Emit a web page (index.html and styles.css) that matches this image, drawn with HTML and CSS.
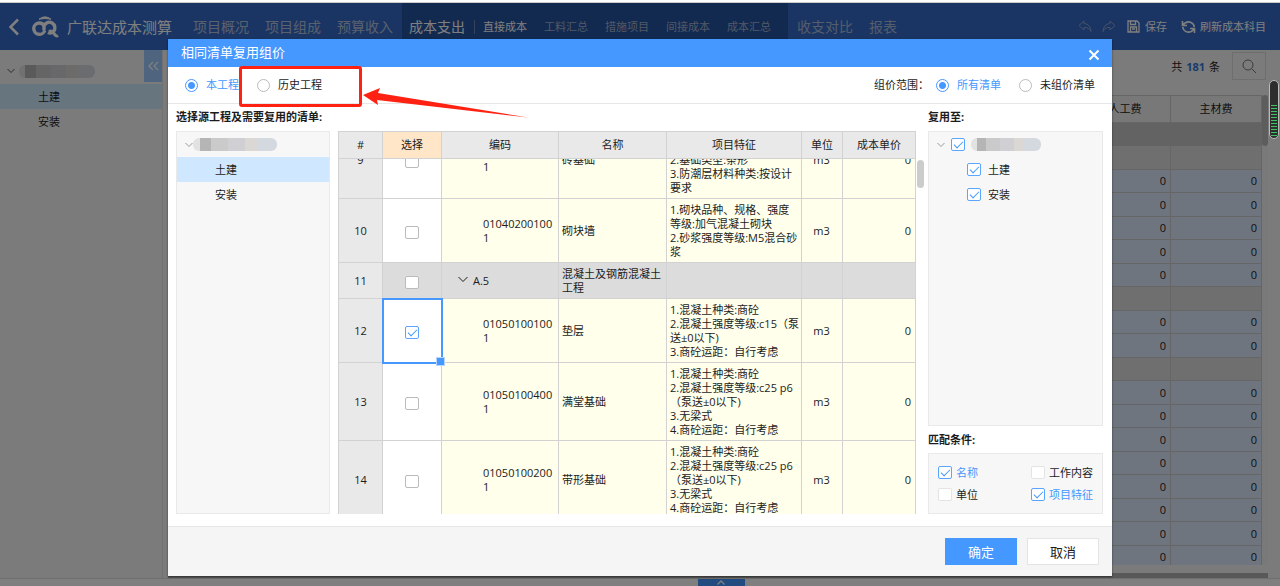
FILE: index.html
```html
<!DOCTYPE html>
<html lang="zh-CN">
<head>
<meta charset="utf-8">
<title>广联达成本测算</title>
<link rel="stylesheet" href="styles.css">
</head>
<body>
<div class="app">
  <header class="topbar">
    <button class="back" aria-label="返回"><svg width="12" height="18" viewBox="0 0 12 18"><path d="M10 1.500 2.500 9l7.500 7.500" fill="none" stroke="currentColor" stroke-width="2.500"/></svg></button>
    <svg class="logo" width="28" height="22" viewBox="0 0 28 22" fill="none" stroke="currentColor">
      <path d="M8 3.200Q14-1.500 20 3.200Q14 1.800 8 3.200Z" fill="currentColor" stroke-width="1"/>
      <path d="M9 18.200A5.600 5.600 0 1 1 13 9.500V14.500" stroke-width="3.400"/>
      <path d="M13 10A5.600 5.600 0 1 1 22.500 15.500Q20 18 17 16.500" stroke-width="3.400"/>
      <path d="M8 18.500Q12 18.500 14 14.500M18 15.500Q21 14 23 17.500T27 19.500" stroke-width="3"/>
    </svg>
    <span class="brand">广联达成本测算</span>
    <nav class="menu">
      <a href="#">项目概况</a><a href="#">项目组成</a><a href="#">预算收入</a>
    </nav>
    <nav class="submenu">
      <a class="main-item" href="#">成本支出</a>
      <a class="on" href="#">直接成本</a><a href="#">工料汇总</a><a href="#">措施项目</a><a href="#">间接成本</a><a href="#">成本汇总</a>
    </nav>
    <nav class="menu after">
      <a href="#">收支对比</a><a href="#">报表</a>
    </nav>
    <div class="tools">
      <button class="dim" aria-label="撤销"><svg width="14" height="13" viewBox="0 0 14 13"><path d="M6 1 1 5.500 6 10V7.500q5-.5 7 4Q12.500 4 6 3.500Z" fill="none" stroke="currentColor"/></svg></button>
      <button class="dim redo" aria-label="重做"><svg width="14" height="13" viewBox="0 0 14 13"><path d="M8 1l5 4.500L8 10V7.500q-5-.5-7 4Q1.500 4 8 3.500Z" fill="none" stroke="currentColor"/></svg></button>
      <button class="save"><svg width="13" height="13" viewBox="0 0 13 13" fill="none" stroke="currentColor" stroke-width="1.300"><path d="M1 1h9l2 2v9H1ZM3.500 1v3.500h5V1M3.500 12V7h6v5M5 9h3"/></svg>保存</button>
      <button class="refresh"><svg width="15" height="14" viewBox="0 0 15 14" fill="none" stroke="currentColor" stroke-width="1.600"><path d="M1.500 1v4.500H6M1.800 5.300Q5 .8 9.500 2.200 12.800 3.500 13.300 7M13.500 13V8.500H9M13.200 8.700Q10 13.200 5.500 11.800 2.200 10.500 1.700 7"/></svg>刷新成本科目</button>
    </div>
  </header>
  <div class="workspace">
    <aside class="side">
      <div class="side-root"><svg width="8" height="6" viewBox="0 0 8 6"><path d="M.5 1 4 4.500 7.500 1" fill="none" stroke="currentColor"/></svg><span class="mask"></span></div>
      <div class="side-item picked">土建</div>
      <div class="side-item">安装</div>
      <button class="fold" aria-label="收起"><svg width="11" height="10" viewBox="0 0 11 10"><path d="M5 1 1 5l4 4M10 1 6 5l4 4" fill="none" stroke="currentColor" stroke-width="1.300"/></svg></button>
    </aside>
    <main class="content">
      <div class="content-bar">
        <span>共 <b>181</b> 条</span>
        <button class="search" aria-label="搜索"><svg width="15" height="15" viewBox="0 0 15 15"><circle cx="6" cy="6" r="5" fill="none" stroke="currentColor"/><path d="m9.500 9.500 4.500 4.500" stroke="currentColor"/></svg></button>
      </div>
      <div class="cost-wrap">
        <table class="cost">
          <colgroup><col><col class="c-num"><col class="c-num"></colgroup>
          <thead><tr><th></th><th>人工费</th><th>主材费</th></tr></thead>
          <tbody>
            <tr class="total"><td></td><td></td><td></td></tr>
            <tr class="group"><td></td><td></td><td></td></tr>
            <tr><td></td><td>0</td><td>0</td></tr>
            <tr><td></td><td>0</td><td>0</td></tr>
            <tr><td></td><td>0</td><td>0</td></tr>
            <tr><td></td><td>0</td><td>0</td></tr>
            <tr><td></td><td>0</td><td>0</td></tr>
            <tr class="group"><td></td><td></td><td></td></tr>
            <tr><td></td><td>0</td><td>0</td></tr>
            <tr><td></td><td>0</td><td>0</td></tr>
            <tr class="group"><td></td><td></td><td></td></tr>
            <tr><td></td><td>0</td><td>0</td></tr>
            <tr><td></td><td>0</td><td>0</td></tr>
            <tr><td></td><td>0</td><td>0</td></tr>
            <tr><td></td><td>0</td><td>0</td></tr>
            <tr><td></td><td>0</td><td>0</td></tr>
            <tr><td></td><td>0</td><td>0</td></tr>
            <tr><td></td><td>0</td><td>0</td></tr>
            <tr><td></td><td>0</td><td>0</td></tr>
          </tbody>
        </table>
        <div class="vtrack"><i></i></div>
      </div>
      <div class="htrack"></div>
    </main>
  </div>
  <footer class="bottom"><button aria-label="展开"><svg width="8" height="5" viewBox="0 0 8 5"><path d="M.5 4.500 4 1l3.500 3.500" fill="none" stroke="currentColor" stroke-width="1.300"/></svg></button></footer>

  <div class="overlay">
    <section class="dialog" role="dialog" aria-labelledby="dlg-title">
      <header class="dlg-head">
        <h1 id="dlg-title">相同清单复用组价</h1>
        <button aria-label="关闭"><svg width="12" height="12" viewBox="0 0 12 12"><path d="m1.500 1.500 9 9m0-9-9 9" stroke="currentColor" stroke-width="2"/></svg></button>
      </header>
      <div class="options">
        <label class="opt"><input type="radio" name="src" checked><span>本工程</span></label>
        <label class="opt"><input type="radio" name="src"><span>历史工程</span></label>
        <span class="range">组价范围：</span>
        <label class="opt"><input type="radio" name="range" checked><span>所有清单</span></label>
        <label class="opt"><input type="radio" name="range"><span>未组价清单</span></label>
      </div>
      <div class="dlg-body">
        <div class="left">
          <h2>选择源工程及需要复用的清单:</h2>
          <div class="pair">
            <div class="panel source">
              <div class="node root"><svg width="8" height="6" viewBox="0 0 8 6"><path d="M.5 1 4 4.500 7.500 1" fill="none" stroke="currentColor"/></svg><span class="mask"></span></div>
              <div class="node leaf picked">土建</div>
              <div class="node leaf">安装</div>
            </div>
            <div class="grid-box">
              <div class="grid-scroll" id="grid">
                <table class="grid">
                  <colgroup><col class="g-no"><col class="g-sel"><col class="g-code"><col class="g-name"><col class="g-feat"><col class="g-unit"><col class="g-price"></colgroup>
                  <thead><tr><th>#</th><th class="sel-head">选择</th><th>编码</th><th>名称</th><th>项目特征</th><th>单位</th><th>成本单价</th></tr></thead>
                  <tbody>
                    <tr class="tall"><th>9</th><td class="sel"><input type="checkbox" aria-label="选择 9"></td><td class="code">010401001001</td><td>砖基础</td><td class="feat end">2.基础类型:条形<br>3.防潮层材料种类:按设计要求</td><td class="unit">m3</td><td class="price">0</td></tr>
                    <tr><th>10</th><td class="sel"><input type="checkbox" aria-label="选择 10"></td><td class="code">010402001001</td><td>砌块墙</td><td class="feat">1.砌块品种、规格、强度<br>等级:加气混凝土砌块<br>2.砂浆强度等级:M5混合砂浆</td><td class="unit">m3</td><td class="price">0</td></tr>
                    <tr class="section"><th>11</th><td class="sel"><input type="checkbox" aria-label="选择 11"></td><td class="chapter"><svg width="10" height="7" viewBox="0 0 10 7"><path d="M.5 1 5 5.500 9.500 1" fill="none" stroke="currentColor"/></svg>A.5</td><td>混凝土及钢筋混凝土工程</td><td></td><td></td><td></td></tr>
                    <tr><th>12</th><td class="sel current"><input type="checkbox" aria-label="选择 12" checked></td><td class="code">010501001001</td><td>垫层</td><td class="feat">1.混凝土种类:商砼<br>2.混凝土强度等级:c15（泵送±0以下)<br>3.商砼运距：自行考虑</td><td class="unit">m3</td><td class="price">0</td></tr>
                    <tr><th>13</th><td class="sel"><input type="checkbox" aria-label="选择 13"></td><td class="code">010501004001</td><td>满堂基础</td><td class="feat">1.混凝土种类:商砼<br>2.混凝土强度等级:c25 p6（泵送±0以下)<br>3.无梁式<br>4.商砼运距：自行考虑</td><td class="unit">m3</td><td class="price">0</td></tr>
                    <tr><th>14</th><td class="sel"><input type="checkbox" aria-label="选择 14"></td><td class="code">010501002001</td><td>带形基础</td><td class="feat">1.混凝土种类:商砼<br>2.混凝土强度等级:c25 p6（泵送±0以下)<br>3.无梁式<br>4.商砼运距：自行考虑</td><td class="unit">m3</td><td class="price">0</td></tr>
                  </tbody>
                </table>
              </div>
              <i class="thumb"></i>
            </div>
          </div>
        </div>
        <div class="right">
          <h2>复用至:</h2>
          <div class="panel targets">
            <div class="node root"><svg width="8" height="6" viewBox="0 0 8 6"><path d="M.5 1 4 4.500 7.500 1" fill="none" stroke="currentColor"/></svg><input type="checkbox" aria-label="工程" checked><span class="mask"></span></div>
            <label class="node child"><input type="checkbox" checked>土建</label>
            <label class="node child"><input type="checkbox" checked>安装</label>
          </div>
          <h2 class="match-title">匹配条件:</h2>
          <div class="panel match">
            <label><input type="checkbox" checked><span>名称</span></label>
            <label><input type="checkbox"><span>工作内容</span></label>
            <label><input type="checkbox"><span>单位</span></label>
            <label><input type="checkbox" checked><span>项目特征</span></label>
          </div>
        </div>
      </div>
      <footer class="dlg-foot">
        <button class="ok">确定</button>
        <button class="cancel">取消</button>
      </footer>
      <div class="callout"></div>
      <svg class="arrow" width="168" height="34" viewBox="0 0 168 34"><path d="M1 8 18 1 16 6 166 30.500 15 13 16 18Z" fill="#ff2213"/></svg>
    </section>
  </div>
  <div class="meter"><i></i></div>
</div>
<script src="main.js"></script>
</body>
</html>
```

FILE: main.js
```js
// Open the list part-way down, with row 9 partly under the header.
document.getElementById('grid').scrollTop = 38;
```

FILE: styles.css
```css
* { box-sizing: border-box; }
body {
  margin: 0;
  font: 11px/14px "Open Sans", "Noto Sans CJK SC", sans-serif;
  color: #1c1c1c;
}
a { color: inherit; text-decoration: none; }
button { font: inherit; color: inherit; border: 0; padding: 0; background: none; display: flex; align-items: center; justify-content: center; }
svg { display: block; flex: none; }
h1, h2 { margin: 0; font-size: 11px; }
table { border-collapse: separate; border-spacing: 0; table-layout: fixed; width: 100%; }

.app { position: relative; height: 100vh; display: flex; flex-direction: column; overflow: hidden; border-top: 2px solid #fff; }

/* top bar */
.topbar { height: 48px; flex: none; display: flex; align-items: center; background: #346ac6; color: #fff; border-top: 1px solid #ccc; white-space: nowrap; }
.back { margin-left: 8px; }
.logo { margin-left: 11px; }
.brand { font-size: 15px; margin-left: 8px; width: 126px; }
.menu { display: flex; gap: 16px; font-size: 14px; color: #b4c3dc; }
.submenu { display: flex; align-items: center; align-self: stretch; gap: 17px; margin-left: 9px; padding: 0 17px 0 7px; background: #2454a0; color: #a3b1cb; }
.submenu .main-item { font-size: 14px; color: #fff; padding-right: 9px; margin-right: -9px; border-right: 1px solid #6f86b5; }
.submenu .on { color: #fff; }
.menu.after { margin-left: 9px; color: #a9bad8; }
.tools { display: flex; align-items: center; margin-left: auto; padding-right: 14px; }
.dim { color: #8ea5ce; }
.redo { margin-left: 10px; }
.save { margin-left: 11px; gap: 5px; }
.refresh { margin-left: 14px; gap: 4px; }

/* page behind the dialog */
.workspace { flex: 1; min-height: 0; display: flex; background: #f7f7f7; }
.side { position: relative; width: 163px; flex: none; border-right: 1px solid #e2e2e2; padding-top: 8px; }
.side-root { height: 26px; display: flex; align-items: center; padding-left: 7px; gap: 4px; color: #555; }
.side-item { height: 25px; display: flex; align-items: center; padding-left: 38px; }
.side-item.picked { background: #cfeaff; }
.mask { display: inline-block; width: 76px; height: 13px; border-radius: 6px; background: linear-gradient(90deg, #e2e2e2 8%, #b5b5b5 8% 22%, #cacaca 22% 42%, #d0d0d4 42% 62%, #dad7d4 62% 76%, #d4d8df 76%); }
.fold { position: absolute; top: 0; right: 0; width: 18px; height: 32px; background: #9cc8ff; color: #fff; }
.content { flex: 1; min-width: 0; margin-left: 5px; display: flex; flex-direction: column; padding-right: 12px; }
.content-bar { height: 45px; flex: none; display: flex; align-items: flex-start; justify-content: flex-end; gap: 12px; padding: 2px 2px 0 0; line-height: 30px; }
.content-bar span { display: flex; gap: 4px; }
.content-bar b { color: #3478d8; }
.search { width: 34px; height: 28px; border: 1px solid #ddd; color: #777; }
.cost-wrap { flex: 1; min-height: 0; overflow: hidden; display: flex; align-items: flex-start; }
.cost { border-top: 1px solid #ccc; }
.c-num { width: 91px; }
.cost th { height: 27px; font-weight: 400; padding: 0; background: #f0f0f0; border-right: 1px solid #ccc; border-bottom: 1px solid #ccc; }
.cost td { height: 23px; padding: 0 4px; text-align: right; background: #dceafe; border-right: 1px solid #ccc; border-bottom: 1px solid #ccc; }
.cost tr:nth-child(even) td { height: 24px; }
.cost .total td { background: #c6c6c6; border-color: #c6c6c6; }
.cost .group td { background: #dfdfdf; }
.vtrack { width: 6px; flex: none; align-self: stretch; background: #f2f2f2; }
.vtrack i { display: block; height: 51px; border-radius: 3px; background: #bbb; }
.htrack { flex: none; height: 5px; margin-top: 8px; background: #b3b3b3; }
.bottom { flex: none; height: 8px; background: #fff; border-top: 1px solid #ddd; display: flex; justify-content: center; padding-left: 162px; }
.bottom button { width: 47px; background: #4598ff; color: #fff; }

/* dialog */
.overlay { position: absolute; inset: 1px 0 0; padding: 36px 168px 10px 168px; background: rgba(0, 0, 0, .5); display: flex; }
.dialog { position: relative; flex: 1; min-width: 0; display: flex; flex-direction: column; background: #fff; box-shadow: 0 1px 2px rgba(0, 0, 0, .5); }
.dlg-head { height: 28px; flex: none; display: flex; align-items: center; justify-content: space-between; padding: 0 12px 2px 13px; background: #4598ff; color: #fff; }
.dlg-head h1 { font-size: 13px; font-weight: 400; }
.dlg-head button { padding-top: 6px; }
.options { height: 37px; flex: none; display: flex; align-items: center; padding: 0 17px; border-bottom: 1px solid #e6e6e6; white-space: nowrap; }
.opt { display: flex; align-items: center; gap: 8px; }
.opt + .opt { margin-left: 18px; }
.range { margin-left: auto; padding-right: 7px; }
input { appearance: none; margin: 0; flex: none; background: #fff; border: 1px solid #bbb; display: inline-block; }
input[type="radio"] { width: 13px; height: 13px; border-radius: 50%; }
input[type="radio"]:checked { border-color: #4598ff; background: radial-gradient(circle, #4598ff 3px, #fff 4px); }
input:checked + span { color: #4598ff; }
input[type="checkbox"] { position: relative; width: 14px; height: 13px; border-radius: 2px; }
input[type="checkbox"]:checked { border-color: #5ba5ff; }
input[type="checkbox"]:checked::after { content: ""; position: absolute; left: 2px; top: 2px; width: 8px; height: 4px; border: solid #4598ff; border-width: 0 0 1px 1px; transform: rotate(-45deg); }

.dlg-body { flex: 1; min-height: 0; display: flex; gap: 12px; padding: 5px 9px 12px 8px; }
.dlg-body h2 { height: 22px; line-height: 15px; font-weight: 700; white-space: nowrap; }
.left { flex: 1; min-width: 0; display: flex; flex-direction: column; }
.pair { flex: 1; min-height: 0; display: flex; gap: 8px; }
.panel { background: #f7f7f7; border: 1px solid #e9e9e9; }
.source { width: 154px; flex: none; }
.node { height: 25px; display: flex; align-items: center; color: #1c1c1c; }
.node.root { padding-left: 8px; color: #999; }
.node.leaf { padding-left: 38px; }
.node.picked { background: #d0e8ff; }
.source .mask { width: 84px; }
.grid-box { position: relative; flex: 1; min-width: 0; }
.grid-scroll { height: 100%; overflow: auto; scrollbar-width: none; border-left: 1px solid #d2d2d2; }
.thumb { position: absolute; right: -8px; top: 29px; width: 7px; height: 28px; border-radius: 4px; background: #ccc; }
.g-no { width: 44px; } .g-sel { width: 59px; } .g-code { width: 117px; } .g-name { width: 108px; }
.g-feat { width: 135px; } .g-unit { width: 41px; } .g-price { width: 73px; }
.grid th, .grid td { border-right: 1px solid #d2d2d2; border-bottom: 1px solid #d2d2d2; font-weight: 400; }
.grid th { background: #e9e9e9; padding: 0; }
.grid thead th { position: sticky; top: 0; z-index: 2; height: 28px; border-top: 1px solid #d2d2d2; }
.grid thead .sel-head { background: #ffe6c8; }
.grid td { background: #ffffeb; padding: 4px 4px 3px 3px; overflow-wrap: anywhere; }
.grid .tall { height: 78px; }
.grid td.feat { padding-right: 0; text-spacing-trim: space-all; }
.grid td.end { vertical-align: bottom; }
.grid td.sel { background: #fff; padding: 3px 0 0; }
.grid td.sel input { display: block; margin: 0 auto; }
.grid td.code { padding-left: 41px; }
.grid td.unit { text-align: center; }
.grid td.price { text-align: right; }
.grid .section td { background: #dcdcdc; }
.grid .chapter svg { display: inline-block; margin: 0 5px 2px 13px; }
.grid td.current { position: relative; outline: 2px solid #4598ff; outline-offset: -1px; }
.grid td.current::after { content: ""; position: absolute; right: -4px; bottom: -4px; width: 7px; height: 7px; background: #4598ff; border: 1px solid #b5d7ff; z-index: 1; }

.right { width: 175px; flex: none; display: flex; flex-direction: column; }
.targets { flex: 1; min-height: 0; }
.targets .root { gap: 6px; }
.targets .mask { width: 70px; }
.targets .child { padding-left: 38px; gap: 7px; }
.dlg-body .match-title { height: 27px; padding-top: 6px; }
.match { display: grid; grid-template-columns: 1fr auto; align-content: center; row-gap: 8px; height: 61px; padding: 0 9px; }
.match label { display: flex; align-items: center; gap: 4px; }
.match input:not(:checked) { border-color: #e4e4e4; }
.dlg-foot { height: 50px; flex: none; display: flex; justify-content: flex-end; align-items: center; gap: 10px; padding-right: 13px; background: #f5f5f5; border-top: 1px solid #e6e6e6; font-size: 13px; }
.dlg-foot button { width: 72px; height: 27px; border: 1px solid #e4e4e4; background: #fff; }
.dlg-foot .ok { background: #4598ff; border-color: #4598ff; color: #fff; }

/* marks laid over the dialog */
.callout { position: absolute; left: 71px; top: 27px; width: 123px; height: 41px; border: 3px solid #ff2213; border-radius: 3px; }
.arrow { position: absolute; left: 194px; top: 48px; }
.meter { position: absolute; right: 1px; top: 78px; width: 10px; height: 59px; padding: 24px 1px 1px; border: 1px solid #bbb; border-radius: 5px; background: #2e2e2e; }
.meter i { display: block; height: 100%; background: repeating-linear-gradient(#3fc463 0 1px, #2e2e2e 1px 3px); }
```
